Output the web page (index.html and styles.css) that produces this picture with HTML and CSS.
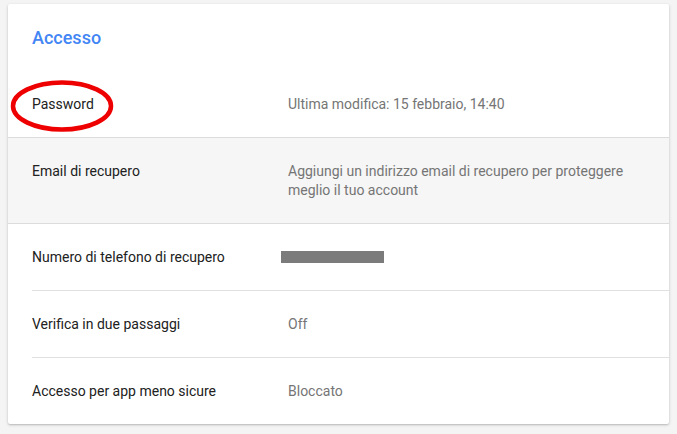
FILE: index.html
```html
<!DOCTYPE html>
<html lang="it">
<head>
<meta charset="utf-8">
<title>Accesso</title>
<link rel="stylesheet" href="styles.css">
</head>
<body>
<section class="card">
  <h2 class="card-title">Accesso</h2>
  <div class="row row-first">
    <div class="label label-marked">Password
      <svg class="mark" width="116" height="62" viewBox="0 0 116 62" aria-hidden="true">
        <ellipse cx="56" cy="28" rx="49" ry="23.5" fill="none" stroke="#ee0000" stroke-width="4.5"/>
      </svg>
    </div>
    <div class="value">Ultima modifica: 15 febbraio, 14:40</div>
  </div>
  <div class="row row-shaded">
    <div class="label">Email di recupero</div>
    <div class="value">Aggiungi un indirizzo email di recupero per proteggere meglio il tuo account</div>
  </div>
  <div class="row row-inset">
    <div class="label">Numero di telefono di recupero</div>
    <div class="value"><span class="redacted"></span></div>
  </div>
  <div class="row row-inset">
    <div class="label">Verifica in due passaggi</div>
    <div class="value">Off</div>
  </div>
  <div class="row row-last">
    <div class="label">Accesso per app meno sicure</div>
    <div class="value">Bloccato</div>
  </div>
</section>
</body>
</html>
```
FILE: styles.css
```css
html, body {
  margin: 0;
  padding: 0;
}
body {
  background: #f4f4f4;
  font-family: Roboto, "Liberation Sans", Arial, sans-serif;
  padding: 4px 8px 10px 8px;
}
.card {
  width: 661px;
  background: #ffffff;
  box-shadow: 0 1px 3px rgba(0, 0, 0, 0.22), 0 1px 1px rgba(0, 0, 0, 0.06);
  border-radius: 2px;
}
.card-title {
  margin: 0;
  padding: 22px 24px 21px 24px;
  font-size: 18px;
  line-height: 24px;
  font-weight: 500;
  color: #4285f4;
}
.row {
  display: flex;
  padding: 24px 32px 23px 24px;
  font-size: 14px;
  line-height: 19px;
}
.row-first {
  border-bottom: 1px solid #dcdcdc;
}
.row-shaded {
  background: #f6f6f6;
  border-bottom: 1px solid #dcdcdc;
}
.row-inset {
  margin-left: 24px;
  padding-left: 0;
  border-bottom: 1px solid #e0e0e0;
}
.label {
  width: 256px;
  flex: none;
  color: #212121;
}
.value {
  flex: 1;
  color: #757575;
}
.label-marked {
  position: relative;
}
.mark {
  position: absolute;
  left: -26px;
  top: -17px;
}
.redacted {
  display: inline-block;
  width: 103px;
  height: 12px;
  background: #7b7b7b;
  margin-left: -7px;
  vertical-align: -1px;
}
```
